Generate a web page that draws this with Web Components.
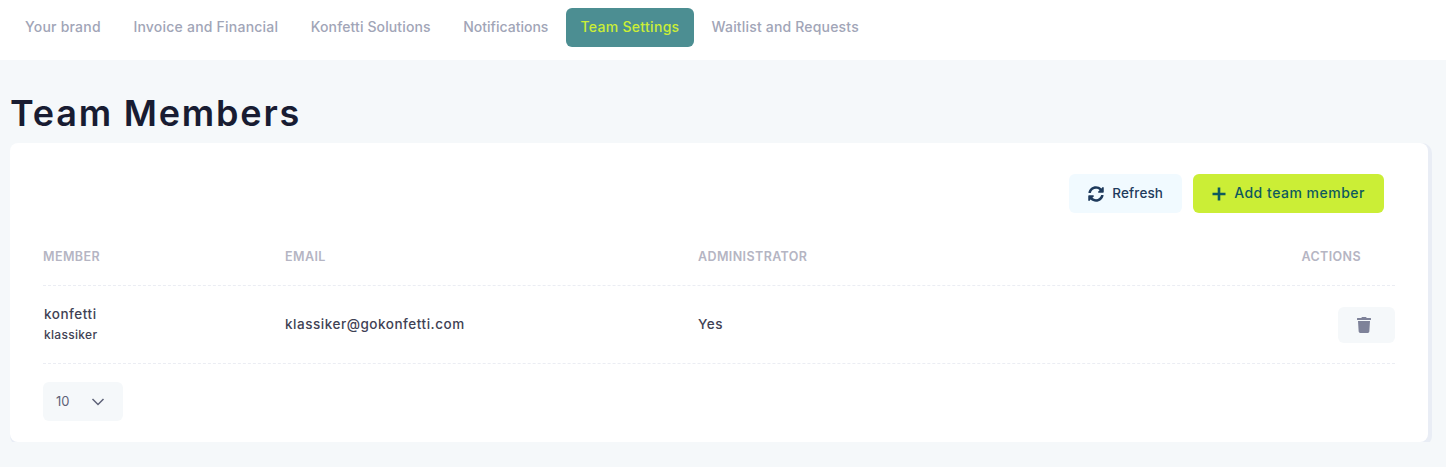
<!DOCTYPE html>
<html lang="en">
<head>
<meta charset="utf-8">
<title>Team Members</title>
<style>
  html, body { margin: 0; padding: 0; background: #f5f8fa; }
  body { font-family: Inter, "Open Sans", sans-serif; color: #3f4254; }
</style>
</head>
<body>
<settings-tabs>
  <tab-link style="--ls:.22px">Your brand</tab-link>
  <tab-link style="--ls:.22px">Invoice and Financial</tab-link>
  <tab-link style="--ls:.12px">Konfetti Solutions</tab-link>
  <tab-link style="--ls:0px">Notifications</tab-link>
  <tab-link style="--ls:.3px" active>Team Settings</tab-link>
  <tab-link style="--ls:.18px">Waitlist and Requests</tab-link>
</settings-tabs>
<page-title>Team Members</page-title>
<team-card>
  <action-button slot="actions" icon="refresh">Refresh</action-button>
  <action-button slot="actions" icon="plus" primary>Add team member</action-button>
  <member-row first="konfetti" last="klassiker" email="klassiker@gokonfetti.com" admin="Yes"></member-row>
</team-card>

<script>
const icons = {
  refresh: '<svg viewBox="0 0 512 512" width="16" height="16"><path fill="currentColor" d="M370.72 133.28C339.458 104.008 298.888 87.962 255.848 88c-77.458.068-144.328 53.178-162.791 126.85-1.344 5.363-6.122 9.15-11.651 9.15H24.103c-7.498 0-13.194-6.807-11.807-14.176C33.933 94.924 134.813 8 256 8c66.448 0 126.791 26.136 171.315 68.685L463.03 40.97C478.149 25.851 504 36.559 504 57.941V192c0 13.255-10.745 24-24 24H345.941c-21.382 0-32.09-25.851-16.971-40.971l41.75-41.749zM32 296h134.059c21.382 0 32.09 25.851 16.971 40.971l-41.75 41.75c31.262 29.273 71.835 45.319 114.876 45.28 77.418-.07 144.315-53.144 162.787-126.849 1.344-5.363 6.122-9.15 11.651-9.15h57.304c7.498 0 13.194 6.807 11.807 14.176C478.067 417.076 377.187 504 256 504c-66.448 0-126.791-26.136-171.315-68.685L48.97 471.03C33.851 486.149 8 475.441 8 454.059V320c0-13.255 10.745-24 24-24z"/></svg>',
  plus: '<svg viewBox="0 0 14 14" width="14" height="14"><path fill="none" stroke="currentColor" stroke-width="2.6" d="M7 .5v13M.5 7h13"/></svg>',
  trash: '<svg viewBox="0 0 448 512" width="14" height="16"><path fill="currentColor" d="M432 32H312l-9.4-18.7A24 24 0 0 0 281.1 0H166.8a23.72 23.72 0 0 0-21.4 13.3L136 32H16A16 16 0 0 0 0 48v32a16 16 0 0 0 16 16h416a16 16 0 0 0 16-16V48a16 16 0 0 0-16-16zM53.2 467a48 48 0 0 0 47.9 45h245.8a48 48 0 0 0 47.9-45L416 128H32z"/></svg>',
  chevron: '<svg viewBox="0 0 14 8" width="14" height="8"><path fill="none" stroke="currentColor" stroke-width="1.5" d="M1.5 1l5.5 5.5L12.500 1"/></svg>'
};

class SettingsTabs extends HTMLElement {
    constructor(){
        super();
        this.attachShadow({ mode: 'open' }).innerHTML = `
          <style>
            :host { display: flex; gap: 2.600px; height: 60px; padding: 8px 10px 0; box-sizing: border-box; background: #fff; }
          </style>
          <slot></slot>`;
    }
}

class TabLink extends HTMLElement {
    constructor(){
        super();
        this.attachShadow({ mode: 'open' }).innerHTML = `
          <style>
            :host { display: flex; align-items: center; height: 39px; padding: 0 15px 3px; box-sizing: border-box; border-radius: 6px;
                    font-size: 14px; font-weight: 550; letter-spacing: var(--ls, .2px); color: #a1a5b7; }
            :host([active]) { background: #4c8e92; color: #cbee36; padding: 0 14.500px 3px; }
          </style>
          <slot></slot>`;
    }
}

class PageTitle extends HTMLElement {
    constructor(){
        super();
        this.attachShadow({ mode: 'open' }).innerHTML = `
          <style>
            :host { display: block; height: 83px; padding: 30px 0 0 10px; box-sizing: border-box;
                    font-size: 36px; line-height: 46px; font-weight: 600; letter-spacing: 1.8px; color: #181c32; }
          </style>
          <slot></slot>`;
    }
}

class ActionButton extends HTMLElement {
    constructor(){
        super();
        const icon = icons[this.getAttribute('icon')];
        this.attachShadow({ mode: 'open' }).innerHTML = `
          <style>
            :host { display: flex; align-items: center; gap: 8px; height: 39px; padding: 0 19px; box-sizing: border-box;
                    border-radius: 6px; background: #f1faff; color: #1e3a5c; font-size: 13.5px; font-weight: 500; letter-spacing: .14px; }
            :host([primary]) { background: #cbee36; color: #0d5a5e; font-size: 14px; letter-spacing: .5px; }
            .i { display: flex; }
            .t { margin-bottom: 2px; }
          </style>
          <span class="i">${icon}</span><span class="t"><slot></slot></span>`;
    }
}

class MemberRow extends HTMLElement {
    constructor(){
        super();
        const a = n => this.getAttribute(n);
        this.attachShadow({ mode: 'open' }).innerHTML = `
          <style>
            :host { display: grid; grid-template-columns: 242px 413px 1fr 57px; align-items: center; height: 77px;
                    font-size: 13.5px; font-weight: 550; color: #3f4254; border-bottom: 1px dashed #ebedf3; }
            .t { margin-bottom: 2px; letter-spacing: .52px; }
            .name { line-height: 21px; padding-left: 1px; }
            .name small { display: block; font-size: 12px; line-height: 19px; letter-spacing: .3px; }
            .del { display: flex; align-items: center; justify-content: center; height: 36px; padding-right: 5px; box-sizing: border-box;
                   border-radius: 6px; background: #f5f8fa; color: #7e8299; }
          </style>
          <div class="t name">${a('first')}<small>${a('last')}</small></div>
          <div class="t">${a('email')}</div>
          <div class="t">${a('admin')}</div>
          <div class="del">${icons.trash}</div>`;
    }
}

class PageSize extends HTMLElement {
    constructor(){
        super();
        this.attachShadow({ mode: 'open' }).innerHTML = `
          <style>
            :host { display: flex; align-items: center; justify-content: space-between; width: 80px; height: 39px;
                    padding: 0 18px 0 13px; box-sizing: border-box; border-radius: 6px; background: #f5f8fa;
                    font-size: 13px; color: #5e6278; }
            .n { margin-bottom: 2px; }
            .i { display: flex; color: #5e6278; }
          </style>
          <span class="n">10</span><span class="i">${icons.chevron}</span>`;
    }
}

class TeamCard extends HTMLElement {
    constructor(){
        super();
        this.attachShadow({ mode: 'open' }).innerHTML = `
          <style>
            :host { display: block; margin: 0 18px 0 10px; height: 299px; padding: 31px 33px 0; box-sizing: border-box;
                    background: #fff; border-radius: 8px; box-shadow: 2px 2px 0 2px #e9edf5; }
            .actions { display: flex; justify-content: flex-end; gap: 11px; height: 39px; padding-right: 11px; }
            .head { display: grid; grid-template-columns: 242px 413px 1fr auto; align-items: center; height: 73px; padding: 15px 34px 0 0;
                    box-sizing: border-box; border-bottom: 1px dashed #ebedf3; font-size: 12.5px; font-weight: 600; letter-spacing: .4px; color: #b5b5c3; }
            .foot { padding-top: 18px; }
          </style>
          <div class="actions"><slot name="actions"></slot></div>
          <div class="head"><span>MEMBER</span><span>EMAIL</span><span>ADMINISTRATOR</span><span>ACTIONS</span></div>
          <slot></slot>
          <div class="foot"><page-size></page-size></div>`;
    }
}

customElements.define('settings-tabs', SettingsTabs);
customElements.define('tab-link', TabLink);
customElements.define('page-title', PageTitle);
customElements.define('action-button', ActionButton);
customElements.define('member-row', MemberRow);
customElements.define('page-size', PageSize);
customElements.define('team-card', TeamCard);
</script>
</body>
</html>
